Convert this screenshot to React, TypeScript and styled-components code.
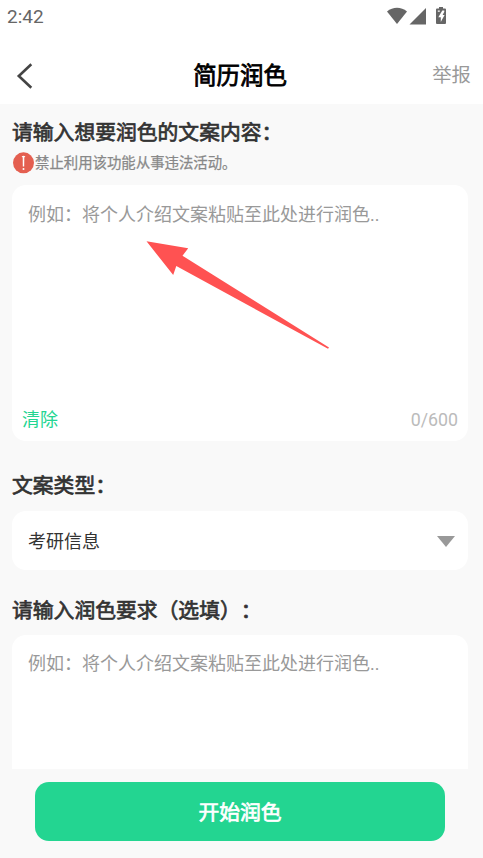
import React from 'react';
import styled, { createGlobalStyle } from 'styled-components';

const GlobalStyle = createGlobalStyle`
  * { box-sizing: border-box; }
  body {
    margin: 0;
    background: #f9f9f9;
    font-family: Roboto, "Noto Sans CJK SC", sans-serif;
    text-spacing-trim: space-all;
    overflow: hidden;
  }
`;

const Screen = styled.div`
  width: 483px;
  height: 858px;
  display: flex;
  flex-direction: column;
  background: #f9f9f9;
  overflow: hidden;
`;

const StatusBar = styled.div`
  height: 34px;
  flex: none;
  display: flex;
  justify-content: space-between;
  padding: 0 36px 0 7px;
  background: #fff;
`;

const Clock = styled.span`
  font-size: 19px;
  line-height: 34px;
  color: #666;
`;

const StatusIcons = styled.svg`
  width: 60px;
  height: 20px;
  margin-top: 6px;
`;

const Header = styled.header`
  height: 70px;
  flex: none;
  display: grid;
  grid-template-columns: 78px 1fr 83px;
  align-items: center;
  padding: 13px 12px 0 14px;
  background: #fff;
`;

const BackButton = styled.button`
  width: 24px;
  height: 32px;
  padding: 0;
  border: 0;
  background: none;
  svg { display: block; }
`;

const Title = styled.h1`
  margin: 0;
  font-size: 23.4px;
  font-weight: 400;
  -webkit-text-stroke: 0.8px currentColor;
  line-height: 32px;
  text-align: center;
  color: #000;
`;

const ReportLink = styled.span`
  padding-top: 1px;
  font-size: 19.4px;
  line-height: 32px;
  text-align: right;
  color: #999;
`;

const Content = styled.main`
  height: 665px;
  flex: none;
  padding: 0 15px 0 12px;
  overflow: hidden;
`;

const SectionTitle = styled.h2<{ $top: number; $bottom: number }>`
  margin: 0;
  padding: ${p => p.$top}px 0 ${p => p.$bottom}px;
  font-size: 20.8px;
  font-weight: 400;
  -webkit-text-stroke: 0.7px currentColor;
  line-height: 30px;
  color: #333;
`;

const Notice = styled.div`
  height: 23px;
  margin-bottom: 11px;
  display: flex;
  align-items: center;
  font-size: 14.4px;
  font-weight: 400;
  -webkit-text-stroke: 0.25px currentColor;
  line-height: 23px;
  color: #888;
  svg { flex: none; }
  span { padding-top: 2px; }
`;

const Card = styled.section<{ $top: number }>`
  position: relative;
  height: 256px;
  display: flex;
  flex-direction: column;
  justify-content: space-between;
  padding: ${p => p.$top}px 10px 8px;
  border-radius: 14px;
  background: #fff;
`;

const Placeholder = styled.p`
  margin: 0;
  padding-left: 6px;
  font-size: 18px;
  line-height: 27px;
  color: #999;
`;

const CardFooter = styled.div`
  display: flex;
  justify-content: space-between;
  font-size: 18px;
  line-height: 27px;
`;

const ClearAction = styled.span`
  color: #23d591;
`;

const Counter = styled.span`
  font-size: 17.8px;
  color: #bbb;
`;

const Pointer = styled.svg`
  position: absolute;
  left: 134px;
  top: 55px;
`;

const Select = styled.div`
  height: 59px;
  display: flex;
  align-items: center;
  justify-content: space-between;
  padding: 1px 13px 0 16px;
  border-radius: 14px;
  background: #fff;
  font-size: 18px;
  line-height: 27px;
  color: #333;
`;

const Footer = styled.footer`
  flex: 1;
  padding: 13px 38px 17px 35px;
`;

const SubmitButton = styled.button`
  width: 410px;
  height: 59px;
  display: block;
  padding: 0 0 1px;
  border: 0;
  border-radius: 14px;
  background: #23d591;
  font-family: inherit;
  font-size: 20.8px;
  font-weight: 400;
  -webkit-text-stroke: 0.7px currentColor;
  color: #fff;
`;

export default function App() {
  return (
    <>
      <GlobalStyle />
      <Screen>
        <StatusBar>
          <Clock>2:42</Clock>
          <StatusIcons viewBox="0 0 60 20">
            <path d="M0 5.4C6 .6 14 .6 20 5.4L10 18Z" fill="#666" />
            <path d="M39 2v16.500H22.500Z" fill="#666" />
            <path d="M52 1h4v1.500h2q1 0 1 1V17q0 1-1 1h-8q-1 0-1-1V3.500q0-1 1-1h2Z" fill="#666" />
            <path d="M50.800 4.500h2v1.200h-2zM55.300 4.500h2v1.200l-1.700 3.200h2L53.800 16v-4.800h-2.500Z" fill="#fff" />
          </StatusIcons>
        </StatusBar>
        <Header>
          <BackButton aria-label="返回">
            <svg width="24" height="32" viewBox="0 0 24 32">
              <path d="M17.300 4.200 4.800 16l12.500 11.800" fill="none" stroke="#444" strokeWidth="2.600" />
            </svg>
          </BackButton>
          <Title>简历润色</Title>
          <ReportLink>举报</ReportLink>
        </Header>
        <Content>
          <SectionTitle $top={14} $bottom={3}>请输入想要润色的文案内容：</SectionTitle>
          <Notice>
            <svg width="23" height="23" viewBox="0 0 23 23">
              <circle cx="11.500" cy="11.800" r="10.500" fill="#e45f50" />
              <path d="M9.600 5.600q1.900-1.600 3.800 0l-1.100.8-.1 9h-1.400l-.1-9Z" fill="#fff" />
              <circle cx="11.500" cy="18" r="1" fill="#fff" />
            </svg>
            <span>禁止利用该功能从事违法活动。</span>
          </Notice>
          <Card $top={16}>
            <Placeholder>例如：将个人介绍文案粘贴至此处进行润色..</Placeholder>
            <CardFooter>
              <ClearAction>清除</ClearAction>
              <Counter>0/600</Counter>
            </CardFooter>
            <Pointer width="184" height="110" viewBox="0 0 184 110">
              <path d="M.5 1.300 42.200 8.300 36.500 15.800 183 107.500 182 108.800 30.300 26 27.200 35Z" fill="#ff5252" />
            </Pointer>
          </Card>
          <SectionTitle $top={30} $bottom={10}>文案类型：</SectionTitle>
          <Select>
            <span>考研信息</span>
            <svg width="18" height="12" viewBox="0 0 18 12">
              <path d="M0 1h18L9 12Z" fill="#999" />
            </svg>
          </Select>
          <SectionTitle $top={26} $bottom={9}>请输入润色要求（选填）：</SectionTitle>
          <Card $top={15}>
            <Placeholder>例如：将个人介绍文案粘贴至此处进行润色..</Placeholder>
          </Card>
        </Content>
        <Footer>
          <SubmitButton>开始润色</SubmitButton>
        </Footer>
      </Screen>
    </>
  );
}
